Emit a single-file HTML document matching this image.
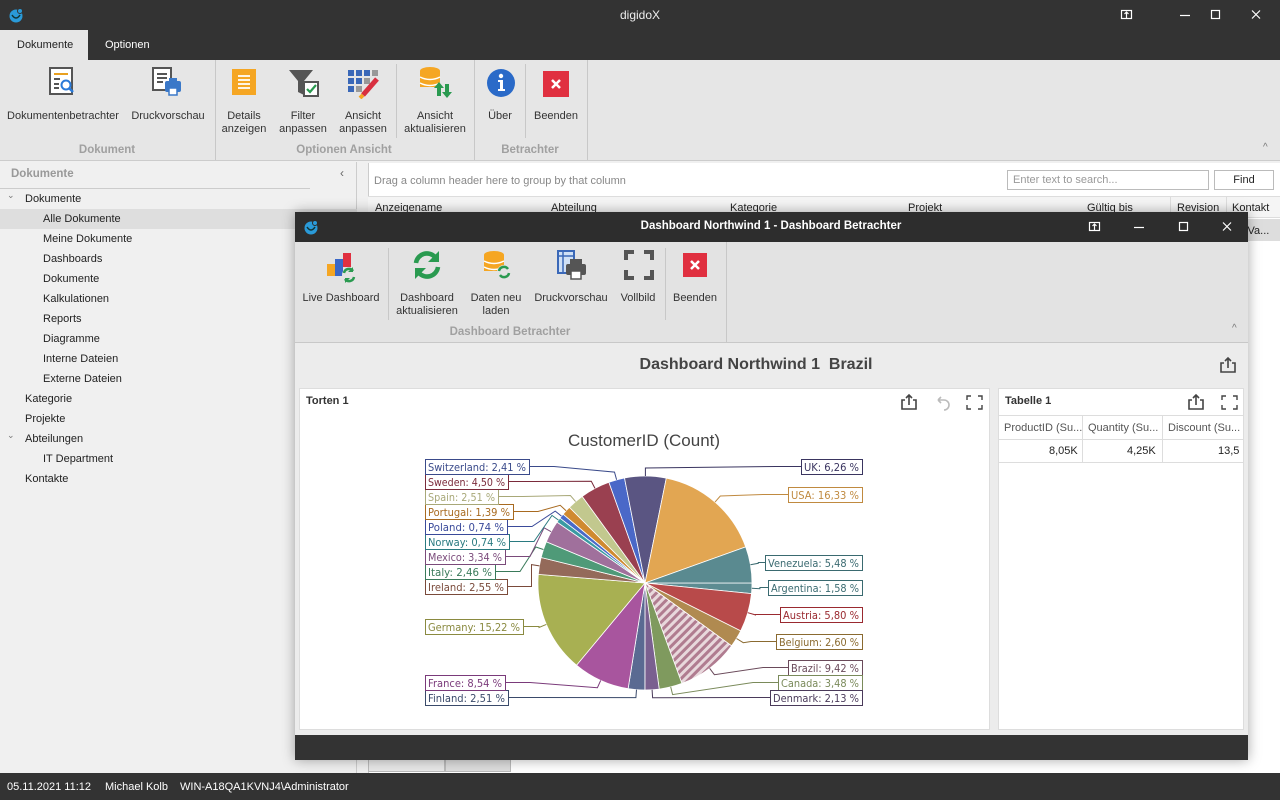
<!DOCTYPE html>
<html><head><meta charset="utf-8">
<style>
*{margin:0;padding:0;box-sizing:border-box}
body{width:1280px;height:800px;position:relative;overflow:hidden;background:#f0f0f0;font-family:"Liberation Sans",sans-serif;font-size:11px;color:#222}
.a{position:absolute}
.t{position:absolute;white-space:nowrap}
.c{text-align:center;transform:translateX(-50%)}
.lbl{line-height:13px;color:#333;font-size:11px}
.grp{color:#a0a0a0;font-weight:bold;font-size:11.5px}
.sep{position:absolute;width:1px;background:#c8c8c8}
</style></head><body>
<div class="a" style="left:0;top:0;width:1280px;height:60px;background:#333"></div>
<svg class="a" style="left:8px;top:7px" width="16" height="16"><circle cx="8" cy="9" r="6.5" fill="#2a9ad8"/><circle cx="12" cy="4" r="2.5" fill="#2a9ad8" stroke="#333"/><path d="M4 8 Q8 14 12 8" stroke="#133" fill="none" stroke-width="1.5"/></svg>
<div class="t c" style="left:640px;top:8px;color:#eee;font-size:12px">digidoX</div>
<svg class="a" style="left:1120px;top:9px" width="150" height="13" fill="none" stroke="#fff" stroke-width="1.2">
<rect x="1.5" y="1.5" width="10" height="8"/><path d="M6.5 3v6M4.5 5l2-2 2 2"/>
<path d="M60 6.5h10"/><rect x="91.5" y="1.5" width="8" height="8"/><path d="M132 1.5l8 8M140 1.5l-8 8"/></svg>
<div class="a" style="left:0;top:30px;width:88px;height:30px;background:#e6e6e6"></div>
<div class="t" style="left:17px;top:39px;color:#222">Dokumente</div>
<div class="t" style="left:105px;top:39px;color:#fff">Optionen</div>
<div class="a" style="left:0;top:60px;width:1280px;height:101px;background:#e6e6e6;border-bottom:1px solid #ccc"></div>
<svg class="a" style="left:47px;top:66px" width="32" height="32"><rect x="3" y="2" width="22" height="26" fill="#fff" stroke="#555" stroke-width="2"/><path d="M7 8h14" stroke="#e8a020" stroke-width="2"/><path d="M7 13h6M7 18h5M7 22h5" stroke="#555" stroke-width="2"/><circle cx="19" cy="19" r="4.5" fill="none" stroke="#2a7ad8" stroke-width="2"/><path d="M22 22l4 4" stroke="#2a7ad8" stroke-width="2.5"/></svg>
<svg class="a" style="left:151px;top:66px" width="34" height="32"><rect x="2" y="2" width="18" height="22" fill="#fff" stroke="#555" stroke-width="2"/><path d="M6 8h10M6 12h10M6 16h6" stroke="#555" stroke-width="2"/><rect x="14" y="15" width="16" height="11" rx="2" fill="#3a78c8"/><rect x="18" y="12" width="8" height="4" fill="#3a78c8"/><rect x="18" y="22" width="8" height="7" fill="#fff" stroke="#3a78c8" stroke-width="1.5"/></svg>
<svg class="a" style="left:231px;top:68px" width="26" height="28"><rect x="1" y="1" width="24" height="26" fill="#f5a623"/><path d="M7 8h12M7 12h12M7 16h12M7 20h12" stroke="#fff" stroke-width="1.8"/></svg>
<svg class="a" style="left:288px;top:68px" width="34" height="32"><path d="M1 2h24l-9 11v14l-6-3V13z" fill="#555"/><rect x="16" y="14" width="14" height="14" fill="#fff" stroke="#555" stroke-width="2"/><path d="M19 21l3 3 6-7" stroke="#2a9a50" stroke-width="2.2" fill="none"/></svg>
<svg class="a" style="left:347px;top:69px" width="34" height="30"><g fill="#3a68b8"><rect x="1" y="1" width="6" height="6"/><rect x="9" y="1" width="6" height="6"/><rect x="17" y="1" width="6" height="6"/><rect x="1" y="9" width="6" height="6"/><rect x="9" y="9" width="6" height="6"/><rect x="1" y="17" width="6" height="6"/></g><g fill="#999"><rect x="25" y="1" width="6" height="6"/><rect x="17" y="9" width="6" height="6"/><rect x="9" y="17" width="6" height="6"/></g><path d="M30 10L16 26" stroke="#d83040" stroke-width="5"/><path d="M16 26l-3 3" stroke="#f5a623" stroke-width="4"/></svg>
<svg class="a" style="left:417px;top:66px" width="36" height="34"><ellipse cx="13" cy="5" rx="10" ry="4" fill="#f5a623"/><rect x="3" y="5" width="20" height="16" fill="#f5a623"/><path d="M3 11q10 5 20 0M3 17q10 5 20 0" stroke="#fff" stroke-width="1.5" fill="none"/><path d="M22 16l5 6h-3v8h-4v-8h-3zM30 32l-5-6h3v-8h4v8h3z" fill="#2a9a50"/></svg>
<svg class="a" style="left:486px;top:68px" width="30" height="30"><circle cx="15" cy="15" r="14" fill="#2a6ac8"/><circle cx="15" cy="8" r="2.2" fill="#fff"/><path d="M12 12h5v9h2v2h-7v-2h2v-7h-2z" fill="#fff"/></svg>
<svg class="a" style="left:543px;top:71px" width="26" height="26"><rect width="26" height="26" fill="#e03040"/><path d="M9 9l8 8M17 9l-8 8" stroke="#fff" stroke-width="2.5"/></svg>
<div class="t c lbl" style="left:63px;top:110px">Dokumentenbetrachter</div>
<div class="t c lbl" style="left:168px;top:110px">Druckvorschau</div>
<div class="t c lbl" style="left:244px;top:110px">Details<br>anzeigen</div>
<div class="t c lbl" style="left:303px;top:110px">Filter<br>anpassen</div>
<div class="t c lbl" style="left:363px;top:110px">Ansicht<br>anpassen</div>
<div class="t c lbl" style="left:435px;top:110px">Ansicht<br>aktualisieren</div>
<div class="t c lbl" style="left:500px;top:110px">Über</div>
<div class="t c lbl" style="left:556px;top:110px">Beenden</div>
<div class="sep" style="left:215px;top:60px;height:100px"></div>
<div class="sep" style="left:396px;top:64px;height:74px"></div>
<div class="sep" style="left:474px;top:60px;height:100px"></div>
<div class="sep" style="left:525px;top:64px;height:74px"></div>
<div class="sep" style="left:587px;top:60px;height:100px"></div>
<div class="t c grp" style="left:107px;top:144px">Dokument</div>
<div class="t c grp" style="left:344px;top:144px">Optionen Ansicht</div>
<div class="t c grp" style="left:530px;top:144px">Betrachter</div>
<div class="t" style="left:1263px;top:142px;color:#777;font-size:10px">^</div>
<div class="a" style="left:0;top:162px;width:357px;height:611px;background:#f0f0f0;border-right:1px solid #ccc"></div>
<div class="t grp" style="left:11px;top:168px;color:#999">Dokumente</div>
<div class="t" style="left:340px;top:166px;color:#666;font-size:12px">‹</div>
<div class="a" style="left:0;top:188px;width:310px;height:1px;background:#ccc"></div>
<div class="a" style="left:0;top:209px;width:357px;height:20px;background:#dedede"></div>
<div style="position:absolute;left:0;top:189px;line-height:20px;font-size:11px">
<div style="padding-left:25px">Dokumente</div>
<div style="padding-left:43px">Alle Dokumente</div>
<div style="padding-left:43px">Meine Dokumente</div>
<div style="padding-left:43px">Dashboards</div>
<div style="padding-left:43px">Dokumente</div>
<div style="padding-left:43px">Kalkulationen</div>
<div style="padding-left:43px">Reports</div>
<div style="padding-left:43px">Diagramme</div>
<div style="padding-left:43px">Interne Dateien</div>
<div style="padding-left:43px">Externe Dateien</div>
<div style="padding-left:25px">Kategorie</div>
<div style="padding-left:25px">Projekte</div>
<div style="padding-left:25px">Abteilungen</div>
<div style="padding-left:43px">IT Department</div>
<div style="padding-left:25px">Kontakte</div></div>
<div class="t" style="left:7px;top:190px;color:#777;font-size:9px">⌄</div>
<div class="t" style="left:7px;top:430px;color:#777;font-size:9px">⌄</div>
<div class="a" style="left:368px;top:163px;width:912px;height:610px;background:#fff;border-left:1px solid #ccc"></div>
<div class="t" style="left:374px;top:175px;color:#888">Drag a column header here to group by that column</div>
<div class="a" style="left:1007px;top:170px;width:202px;height:20px;border:1px solid #bbb;background:#fff;color:#999;padding:3px 5px">Enter text to search...</div>
<div class="a" style="left:1214px;top:170px;width:60px;height:20px;border:1px solid #bbb;background:#fff;text-align:center;padding-top:3px">Find</div>
<div class="a" style="left:368px;top:196px;width:912px;height:22px;background:#f5f5f5;border-top:1px solid #ddd;border-bottom:1px solid #ddd"></div>
<div class="t" style="left:375px;top:202px">Anzeigename</div><div class="t" style="left:551px;top:202px">Abteilung</div><div class="t" style="left:730px;top:202px">Kategorie</div><div class="t" style="left:908px;top:202px">Projekt</div><div class="t" style="left:1087px;top:202px">Gültig bis</div><div class="t" style="left:1177px;top:202px">Revision</div><div class="t" style="left:1232px;top:202px">Kontakt</div>
<div class="a" style="left:1170px;top:196px;width:1px;height:44px;background:#ddd"></div>
<div class="a" style="left:1226px;top:196px;width:1px;height:44px;background:#ddd"></div>
<div class="a" style="left:1227px;top:219px;width:53px;height:22px;background:#ddd"></div>
<div class="t" style="left:1242px;top:225px">itVa...</div>
<div class="a" style="left:368px;top:750px;width:77px;height:22px;border:1px solid #bbb;background:#e8e8e8"></div>
<div class="a" style="left:445px;top:750px;width:66px;height:22px;border:1px solid #bbb;background:#ddd"></div>
<div class="a" style="left:0;top:773px;width:1280px;height:27px;background:#333"></div>
<div class="t" style="left:7px;top:781px;color:#fff">05.11.2021 11:12</div>
<div class="t" style="left:105px;top:781px;color:#fff">Michael Kolb</div>
<div class="t" style="left:180px;top:781px;color:#fff">WIN-A18QA1KVNJ4\Administrator</div>
<div class="a" style="left:295px;top:212px;width:953px;height:548px;background:#ececec;box-shadow:0 0 12px rgba(0,0,0,.35)"></div>
<div class="a" style="left:295px;top:212px;width:953px;height:30px;background:#2d2d2d"></div>
<svg class="a" style="left:303px;top:219px" width="16" height="16"><circle cx="8" cy="9" r="6.5" fill="#2a9ad8"/><circle cx="12" cy="4" r="2.5" fill="#2a9ad8" stroke="#2d2d2d"/><path d="M4 8 Q8 14 12 8" stroke="#133" fill="none" stroke-width="1.5"/></svg>
<div class="t c" style="left:771px;top:220px;color:#fff;font-weight:bold;font-size:11.5px">Dashboard Northwind 1 - Dashboard Betrachter</div>
<svg class="a" style="left:1088px;top:221px" width="150" height="13" fill="none" stroke="#fff" stroke-width="1.2">
<rect x="1.5" y="1.5" width="10" height="8"/><path d="M6.5 3v6M4.5 5l2-2 2 2"/>
<path d="M46 6.5h10"/><rect x="91.5" y="1.5" width="8" height="8"/><path d="M135 1.5l8 8M143 1.5l-8 8"/></svg>
<div class="a" style="left:295px;top:242px;width:953px;height:101px;background:#e3e3e3;border-bottom:1px solid #c8c8c8"></div>
<svg class="a" style="left:325px;top:252px" width="34" height="32"><rect x="2" y="12" width="8" height="12" fill="#f5a623"/><rect x="10" y="7" width="8" height="17" fill="#3a68c8"/><rect x="18" y="1" width="8" height="14" fill="#e03040"/><circle cx="24" cy="23" r="7" fill="#e3e3e3"/><path d="M19 21a5 5 0 0 1 9-2M29 25a5 5 0 0 1-9 2" stroke="#2a9a50" stroke-width="2.5" fill="none"/><path d="M28 15v5h-5zM20 31v-5h5z" fill="#2a9a50"/></svg>
<svg class="a" style="left:411px;top:250px" width="32" height="30"><path d="M5 13a11 11 0 0 1 19-6M27 17a11 11 0 0 1-19 6" stroke="#2a9a50" stroke-width="4.5" fill="none"/><path d="M28 1v11h-11zM4 29V18h11z" fill="#2a9a50"/></svg>
<svg class="a" style="left:482px;top:250px" width="32" height="32"><ellipse cx="12" cy="5" rx="10" ry="4" fill="#f5a623"/><rect x="2" y="5" width="20" height="16" fill="#f5a623"/><path d="M2 11q10 5 20 0M2 17q10 5 20 0" stroke="#fff" stroke-width="1.5" fill="none"/><circle cx="22" cy="22" r="7" fill="#e3e3e3"/><path d="M17 21a5 5 0 0 1 9-2M27 23a5 5 0 0 1-9 2" stroke="#2a9a50" stroke-width="2.5" fill="none"/></svg>
<svg class="a" style="left:556px;top:249px" width="34" height="32"><rect x="2" y="2" width="16" height="22" fill="#cfe0f5" stroke="#3a68b8" stroke-width="2"/><path d="M2 7h16M7 2v22" stroke="#3a68b8" stroke-width="1.5"/><rect x="10" y="15" width="20" height="11" rx="2" fill="#555"/><rect x="14" y="10" width="12" height="6" fill="#555"/><rect x="15" y="22" width="10" height="8" fill="#fff" stroke="#555" stroke-width="1.5"/></svg>
<svg class="a" style="left:624px;top:250px" width="30" height="30" fill="none" stroke="#555" stroke-width="4"><path d="M2 10V2h8M20 2h8v8M28 20v8h-8M10 28H2v-8"/></svg>
<svg class="a" style="left:683px;top:253px" width="24" height="24"><rect width="24" height="24" fill="#e03040"/><path d="M8 8l8 8M16 8l-8 8" stroke="#fff" stroke-width="2.5"/></svg>
<div class="t c lbl" style="left:341px;top:292px">Live Dashboard</div>
<div class="t c lbl" style="left:427px;top:292px">Dashboard<br>aktualisieren</div>
<div class="t c lbl" style="left:496px;top:292px">Daten neu<br>laden</div>
<div class="t c lbl" style="left:571px;top:292px">Druckvorschau</div>
<div class="t c lbl" style="left:638px;top:292px">Vollbild</div>
<div class="t c lbl" style="left:695px;top:292px">Beenden</div>
<div class="sep" style="left:388px;top:248px;height:72px"></div>
<div class="sep" style="left:665px;top:248px;height:72px"></div>
<div class="sep" style="left:726px;top:242px;height:101px"></div>
<div class="t c grp" style="left:510px;top:326px">Dashboard Betrachter</div>
<div class="t" style="left:1232px;top:323px;color:#777;font-size:10px">^</div>
<div class="t c" style="left:756px;top:356px;font-size:16px;font-weight:bold;color:#444">Dashboard Northwind 1&nbsp; Brazil</div>
<svg class="a" style="left:1219px;top:356px" width="18" height="18" fill="none" stroke="#444" stroke-width="1.6"><path d="M5 7H2v9h14V7h-3M9 12V2M6 5l3-3 3 3"/></svg>
<div class="a" style="left:299px;top:388px;width:691px;height:342px;background:#fff;border:1px solid #ddd"></div>
<div class="t" style="left:306px;top:395px;font-weight:bold;color:#333">Torten 1</div>
<svg class="a" style="left:900px;top:393px" width="85" height="18" fill="none" stroke="#444" stroke-width="1.6"><path d="M5 7H2v9h14V7h-3M9 12V2M6 5l3-3 3 3"/><path d="M38 7h6a5 5 0 0 1 0 10M38 7l3-3M38 7l3 3" stroke="#bbb"/><path d="M67 7V3h4M78 3h4v4M82 12v4h-4M71 16h-4v-4" stroke-width="1.4"/></svg>
<div class="a" style="left:998px;top:388px;width:246px;height:342px;background:#fff;border:1px solid #ddd"></div>
<div class="t" style="left:1005px;top:395px;font-weight:bold;color:#333">Tabelle 1</div>
<svg class="a" style="left:1187px;top:393px" width="52" height="18" fill="none" stroke="#444" stroke-width="1.6"><path d="M5 7H2v9h14V7h-3M9 12V2M6 5l3-3 3 3"/><path d="M35 7V3h4M46 3h4v4M50 12v4h-4M39 16h-4v-4" stroke-width="1.4"/></svg>
<div class="a" style="left:999px;top:415px;width:244px;height:48px;border-top:1px solid #ddd"></div>
<div class="a" style="left:999px;top:439px;width:244px;height:1px;background:#ddd"></div>
<div class="a" style="left:999px;top:462px;width:244px;height:1px;background:#ddd"></div>
<div class="a" style="left:1082px;top:415px;width:1px;height:48px;background:#ddd"></div>
<div class="a" style="left:1162px;top:415px;width:1px;height:48px;background:#ddd"></div>
<div class="t" style="left:1004px;top:422px;color:#555">ProductID (Su...</div>
<div class="t" style="left:1088px;top:422px;color:#555">Quantity (Su...</div>
<div class="t" style="left:1168px;top:422px;color:#555">Discount (Su...</div>
<div class="t" style="left:1049px;top:445px">8,05K</div>
<div class="t" style="left:1127px;top:445px">4,25K</div>
<div class="t" style="left:1218px;top:445px">13,5</div>
<div class="a" style="left:295px;top:735px;width:953px;height:25px;background:#333"></div>
<div class="t c" style="left:644px;top:431px;font-size:17px;color:#444">CustomerID (Count)</div>
<svg id="pie" class="a" style="left:0;top:0" width="1280" height="800"></svg>
<script>
var d=[["Argentina",1.58,"#5d8c92","#3a6a70"],["Austria",5.80,"#b84a4a","#9a2a30"],["Belgium",2.60,"#b08a50","#8a6a30"],["Brazil",9.42,"url(#hatch)","#6a4a5a"],["Canada",3.48,"#7f9a5e","#7a8a5a"],["Denmark",2.13,"#7a6090","#4a3a5a"],["Finland",2.51,"#5a6a92","#3a4a6a"],["France",8.54,"#a8559e","#7a3a7a"],["Germany",15.22,"#a8b052","#8a8a40"],["Ireland",2.55,"#946a5a","#7a4a3a"],["Italy",2.46,"#4f9a78","#3a7a5a"],["Mexico",3.34,"#a0709c","#7a4a7a"],["Norway",0.74,"#3a9aa2","#2a7a80"],["Poland",0.74,"#4a6ac8","#3a4a9a"],["Portugal",1.39,"#d08a30","#a86a20"],["Spain",2.51,"#c2c88e","#a8a878"],["Sweden",4.50,"#9a4050","#7a2a3a"],["Switzerland",2.41,"#4a68c8","#3a4a8a"],["UK",6.26,"#5a5582","#3a3560"],["USA",16.33,"#e2a652","#c08a40"],["Venezuela",5.48,"#5a8a90","#3a6a70"]];
var L={Switzerland:[425,459,104],Sweden:[425,474,83],Spain:[425,489,73],Portugal:[425,504,88],Poland:[425,519,82],Norway:[425,534,84],Mexico:[425,549,80],Italy:[425,564,70],Ireland:[425,579,82],Germany:[425,619,98],France:[425,675,80],Finland:[425,690,83],UK:[801,459,61],USA:[788,487,74],Venezuela:[765,555,97],Argentina:[768,580,94],Austria:[780,607,82],Belgium:[776,634,86],Brazil:[788,660,74],Canada:[778,675,84],Denmark:[770,690,92]};
var cx=645,cy=583,r=107,tot=0;d.forEach(function(e){tot+=e[1]});
var s='<defs><pattern id="hatch" width="6" height="6" patternUnits="userSpaceOnUse" patternTransform="rotate(45)"><rect width="6" height="6" fill="#e8d8dc"/><rect width="3" height="6" fill="#b07c90"/></pattern></defs>';
var a=0,lines='',boxes='';
d.forEach(function(e){var a2=a+e[1]/tot*2*Math.PI;
var x1=cx+r*Math.cos(a),y1=cy+r*Math.sin(a),x2=cx+r*Math.cos(a2),y2=cy+r*Math.sin(a2);
s+='<path d="M'+cx+' '+cy+'L'+x1.toFixed(1)+' '+y1.toFixed(1)+'A'+r+' '+r+' 0 '+((a2-a)>Math.PI?1:0)+' 1 '+x2.toFixed(1)+' '+y2.toFixed(1)+'Z" fill="'+e[2]+'" stroke="#fff" stroke-width="0.8"/>';
var m=(a+a2)/2,px=cx+r*Math.cos(m),py=cy+r*Math.sin(m),qx=cx+(r+8)*Math.cos(m),qy=cy+(r+8)*Math.sin(m);
var b=L[e[0]],right=b[0]>cx,by=b[1]+7.5,bx=right?b[0]:b[0]+b[2];
lines+='<polyline points="'+px.toFixed(1)+','+py.toFixed(1)+' '+qx.toFixed(1)+','+qy.toFixed(1)+' '+(right?Math.max(qx,bx-25):Math.min(qx,bx+25)).toFixed(1)+','+by+' '+bx+','+by+'" fill="none" stroke="'+e[3]+'" stroke-width="1"/>';
boxes+='<rect x="'+(b[0]+.5)+'" y="'+(b[1]+.5)+'" width="'+b[2]+'" height="15" fill="#fff" stroke="'+e[3]+'"/><text x="'+(b[0]+3)+'" y="'+(b[1]+12)+'" font-family="DejaVu Sans,sans-serif" font-size="10.5" fill="'+e[3]+'" textLength="'+(b[2]-6)+'" lengthAdjust="spacingAndGlyphs">'+e[0]+': '+e[1].toFixed(2).replace('.',',')+' %</text>';
a=a2;});
document.getElementById('pie').innerHTML=s+lines+boxes;
</script>
</body></html>
